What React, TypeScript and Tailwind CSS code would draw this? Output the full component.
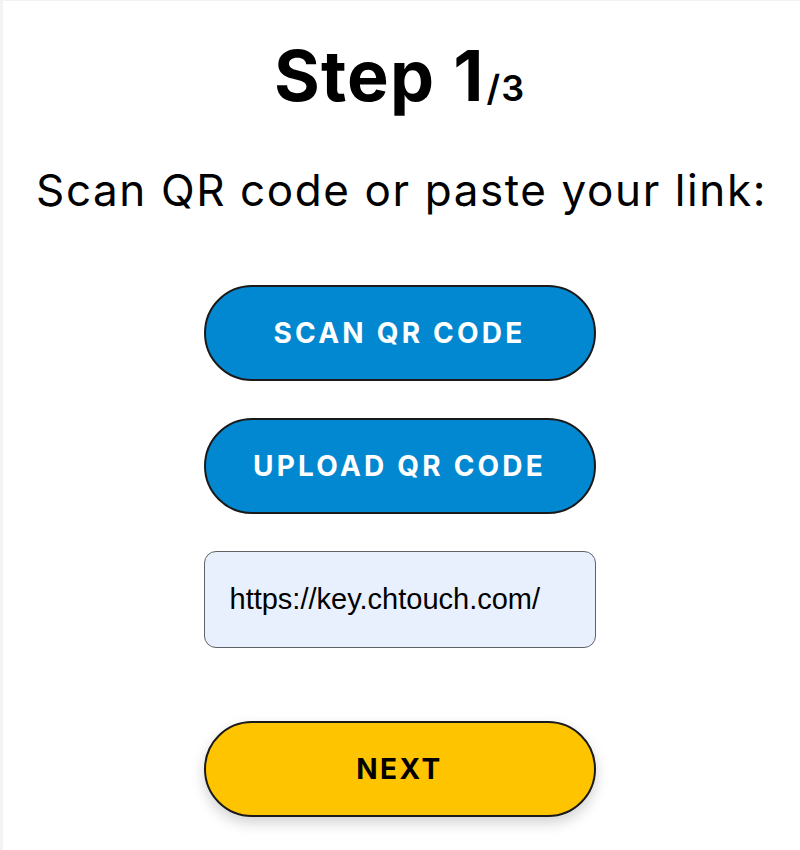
import { useEffect, useRef, useState } from "react";

const font = { fontFamily: '"Inter", "Lato", sans-serif' };

export default function App() {
	const [link, setLink] = useState("https://key.chtouch.com/");
	const inputRef = useRef<HTMLInputElement>(null);

	useEffect(() => {
		const el = inputRef.current;
		if (!el) return;
		el.focus();
		el.setSelectionRange(el.value.length, el.value.length);
	}, []);

	return (
		<div className="min-h-screen w-full border-t border-l-[3px] border-[#f3f3f3] bg-white text-black" style={font}>
			<div className="flex flex-col items-center pt-[33px] pr-[4px]">
				{/* Title */}
				<h1 className="flex items-baseline text-[70px] font-bold leading-[84px] tracking-[1.2px]">
					Step 1<span className="ml-[2px] text-[36px] font-semibold tracking-[1px]">/3</span>
				</h1>

				<p className="mt-[30px] pl-[4px] text-[44px] leading-[60px] tracking-[1.6px]">
					Scan QR code or paste your link:
				</p>

				<div className="mt-[65px] flex w-[392px] flex-col gap-[37px]">
					<button className="h-[96px] w-full rounded-full border-2 border-[#1a1a1a] bg-[#0288d1] text-[28px] font-bold tracking-[3.2px] text-white">
						SCAN QR CODE
					</button>
					<button className="h-[96px] w-full rounded-full border-2 border-[#1a1a1a] bg-[#0288d1] text-[28px] font-bold tracking-[3.2px] text-white">
						UPLOAD QR CODE
					</button>
					<input
						ref={inputRef}
						value={link}
						onChange={(e) => setLink(e.target.value)}
						className="h-[97px] w-full rounded-[12px] border border-[#5f6368] bg-[#e8f0fe] px-[25px] text-[29px] text-black caret-black outline-none"
						style={{ fontFamily: '"Liberation Sans", Arial, sans-serif' }}
					/>
				</div>

				<button className="mt-[73px] h-[96px] w-[392px] rounded-full border-2 border-[#1a1a1a] bg-[#ffc400] text-[28px] font-bold tracking-[2.5px] text-black shadow-[0_6px_14px_rgba(0,0,0,0.18)]">
					NEXT
				</button>
			</div>
		</div>
	);
}
